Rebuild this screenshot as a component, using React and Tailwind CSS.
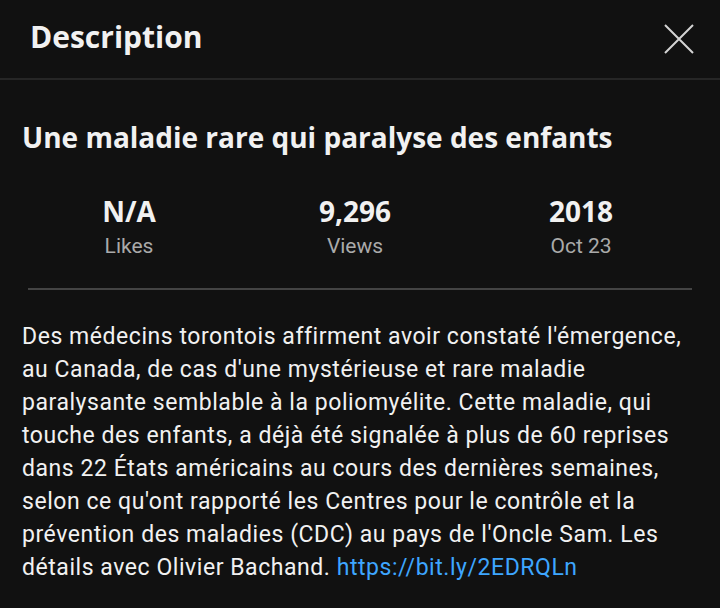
export default function App() {
  const stats = [
    { value: "N/A", label: "Likes" },
    { value: "9,296", label: "Views" },
    { value: "2018", label: "Oct 23" },
  ];

  return (
    <div className="w-[720px] h-[608px] bg-[#111111] text-[#f1f1f1] overflow-hidden font-['Roboto',sans-serif]">
      {/* Header */}
      <div className="h-[80px] flex items-center justify-between pl-[30px] pr-[24px] border-b-2 border-[#262626]">
        <h1 className="font-['Open_Sans',sans-serif] font-bold text-[30px] leading-none pb-[4px]">
          Description
        </h1>
        <button className="w-[34px] h-[34px] flex items-center justify-center">
          <svg width="32" height="32" viewBox="0 0 32 32" fill="none" stroke="#d4d4d4" strokeWidth="2">
            <path d="M2 2 L30 30 M30 2 L2 30" />
          </svg>
        </button>
      </div>

      {/* Title */}
      <div className="px-[22px] pt-[39px]">
        <h2 className="font-['Open_Sans',sans-serif] font-bold text-[28px] leading-[36px]">
          Une maladie rare qui paralyse des enfants
        </h2>
      </div>

      {/* Stats */}
      <div className="grid grid-cols-3 pl-[16px] pr-[26px] pt-[38px]">
        {stats.map((s) => (
          <div key={s.label} className="flex flex-col items-center">
            <span className="font-['Open_Sans',sans-serif] font-bold text-[28px] leading-[36px]">{s.value}</span>
            <span className="text-[21px] leading-[34px] text-[#aaaaaa]">{s.label}</span>
          </div>
        ))}
      </div>

      <div className="mx-[28px] mt-[25px] h-[2px] bg-[#444444]" />

      {/* Body */}
      <p className="pl-[22px] pr-[20px] pt-[30px] text-[23px] leading-[33px] tracking-[0.55px] text-[#f1f1f1]">
        Des médecins torontois affirment avoir constaté l'émergence, au Canada, de cas d'une mystérieuse et rare maladie paralysante semblable à la poliomyélite. Cette maladie, qui touche des enfants, a déjà été signalée à plus de 60 reprises dans 22 États américains au cours des dernières semaines, selon ce qu'ont rapporté les Centres pour le contrôle et la prévention des maladies (CDC) au pays de l'Oncle Sam. Les détails avec Olivier Bachand.{" "}
        <span className="text-[#3ea6ff]">https://bit.ly/2EDRQLn</span>
      </p>
    </div>
  );
}
